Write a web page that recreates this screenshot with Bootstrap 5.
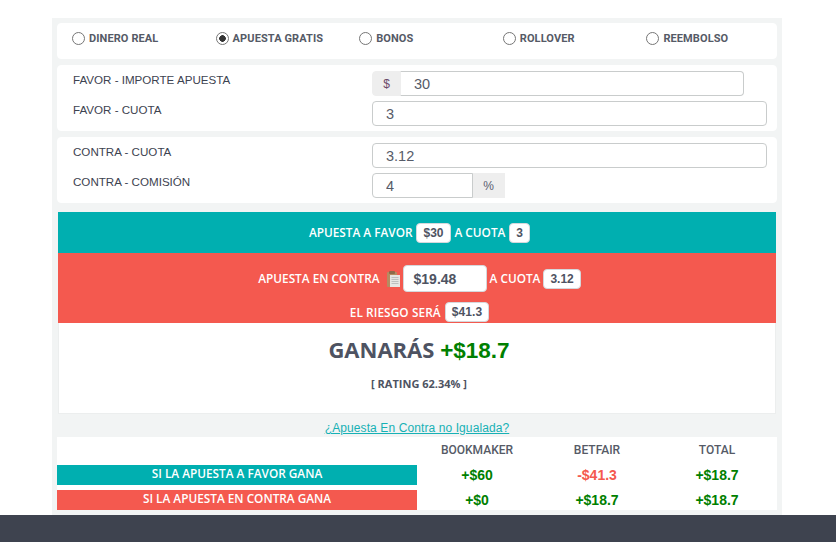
<!DOCTYPE html>
<html lang="es">
<head>
<meta charset="utf-8">
<title>Calculadora</title>
<link href="https://cdn.jsdelivr.net/npm/bootstrap@5.3.0/dist/css/bootstrap.min.css" rel="stylesheet">
<style>
html,body{height:542px;overflow:hidden}
body{background:#fff;font-family:"Liberation Sans",Arial,sans-serif;color:#444a5a;display:flex;flex-direction:column}
.calc-wrap{width:730px;height:497px;margin:18px 0 0 52px;background:#f2f4f4;padding:5px;flex:none}
.pane{background:#fff;border:1px solid #fff;border-radius:4px;margin-bottom:6px}
.radios{height:36px;padding:8px 0 0 14px}
.radio-item{width:143.6px;flex:none;align-self:flex-start;display:flex;align-items:center;font:700 11px/13px Roboto,sans-serif;letter-spacing:.1px;color:#555a66;gap:4px}
.radio-item .form-check-input{width:13px;height:13px;margin:0;border:1px solid #767676;border-radius:50%;flex:none}
.radio-item .form-check-input:checked{background:#fff radial-gradient(circle,#333 0 3px,transparent 3.6px);border-color:#767676}
.form-line{height:66px;padding:5px 9px 0 0}
.field-row{height:25px;margin-bottom:5px}
.field-label{width:314px;padding:2px 0 0 15px;font-size:11.6px;line-height:14px;color:#3d4350;align-self:flex-start;flex:none}
.field-box{width:395px;flex:none}
.field-input{height:25px;min-height:25px;padding:0 13px;font-size:14.5px;line-height:23px;color:#565b68;border:1px solid #c9cccc;border-radius:4px;box-shadow:none}
.addon{height:25px;padding:0 10px;font-size:12px;background:#eeeeee;border:1px solid #eeeeee;color:#6b4a6a}
.money .addon{width:29px;justify-content:center;border-radius:4px 0 0 4px}
.money{width:372px}
.money .field-input{border-left-color:#eee}
.percent{width:133px}
.percent .addon{width:33px;justify-content:center;border-radius:0;color:#5a6070}
.result{margin:9px 1px 0}
.band-a{background:#00afb0;height:41px;padding:0 0 2px 5px}
.band-b{background:#f4594f;height:70px;padding:10px 0 0 5px}
.band-a,.band-b,.win-bar{color:#fff;font:600 11.8px/16px "Open Sans",sans-serif}
.tag{display:inline-block;background:#fff;color:#4e5362;border:1px solid #d5d8dc;border-radius:4px;font:700 12px/16px "Liberation Sans",sans-serif;padding:1px 6px;height:20px;margin-top:2px}
.risk-line .tag{margin-top:0}
.stake-row{padding-bottom:2px}
.stake{width:84px;height:27px;margin:2px 3px 0 0;background:#fff;border:1px solid #d5d8dc;border-radius:4px;font:700 14px/27px "Liberation Sans",sans-serif;color:#4e5362;padding:0 0 0 10px;display:inline-block;text-align:left}
.clip{margin:3px 3px 0 7px}
.cuota-tag{margin-left:3px}
.risk-line{margin-top:8px;letter-spacing:.1px}
.win-box{height:91px;background:#fff;border:1px solid #eceeee;border-top:0;padding:10px 0 0 4px}
.win-title{font:700 22px/32px "Open Sans",sans-serif;color:#4e5362}
.win-title b{font:700 22.5px/32px "Liberation Sans",sans-serif;color:#008000}
.rating{font:700 11px/14px "Open Sans",sans-serif;color:#4e5362;margin-top:10px}
.unmatched{height:23px;font-size:12px;letter-spacing:.1px;line-height:28px}
.unmatched a{color:#17b1b5}
.outcome{background:#fff;height:73px;width:720px;margin:0}
.outcome .head-cell{height:28px;font:500 12px/27px Roboto,sans-serif;color:#555a66}
.outcome .val{height:25px;font-size:14px;line-height:20px;font-weight:700;color:#008000}
.outcome .val.neg{color:#f4594f}
.win-bar{height:20px;line-height:17px;text-align:center}
.win-bar.t{background:#00afb0}
.win-bar.r{background:#f4594f}
.foot{background:#3e434f;height:27px;flex:none}
</style>
</head>
<body>
<div class="calc-wrap">
  <div class="pane radios d-flex">
    <label class="radio-item"><input class="form-check-input" type="radio" name="m"> DINERO REAL</label>
    <label class="radio-item"><input class="form-check-input" type="radio" name="m" checked> APUESTA GRATIS</label>
    <label class="radio-item"><input class="form-check-input" type="radio" name="m"> BONOS</label>
    <label class="radio-item"><input class="form-check-input" type="radio" name="m"> ROLLOVER</label>
    <label class="radio-item"><input class="form-check-input" type="radio" name="m"> REEMBOLSO</label>
  </div>
  <div class="pane form-line">
    <div class="d-flex field-row">
      <div class="field-label">FAVOR - IMPORTE APUESTA</div>
      <div class="field-box"><div class="input-group flex-nowrap money"><span class="input-group-text addon">$</span><input class="form-control field-input" value="30"></div></div>
    </div>
    <div class="d-flex field-row">
      <div class="field-label">FAVOR - CUOTA</div>
      <div class="field-box"><input class="form-control field-input" value="3"></div>
    </div>
  </div>
  <div class="pane form-line">
    <div class="d-flex field-row">
      <div class="field-label">CONTRA - CUOTA</div>
      <div class="field-box"><input class="form-control field-input" value="3.12"></div>
    </div>
    <div class="d-flex field-row">
      <div class="field-label">CONTRA - COMISIÓN</div>
      <div class="field-box"><div class="input-group flex-nowrap percent"><input class="form-control field-input" value="4"><span class="input-group-text addon">%</span></div></div>
    </div>
  </div>
  <div class="result text-center">
    <div class="band-a d-flex align-items-center justify-content-center gap-1">APUESTA A FAVOR <span class="tag">$30</span> A CUOTA <span class="tag">3</span></div>
    <div class="band-b">
      <div class="stake-row d-flex align-items-center justify-content-center">
        APUESTA EN CONTRA
        <svg class="clip" width="13" height="16" viewBox="0 0 13 16"><rect x="0" y="1" width="10" height="15" rx="1" fill="#b58c62"/><rect x="3" y="4" width="10" height="12" fill="#e6e6e3"/><path d="M4.5 6.5h7M4.5 8.5h7M4.5 10.5h7M4.5 12.5h7" stroke="#bcbfbf" stroke-width="1"/><rect x="2" y="0" width="6" height="3" rx="1" fill="#8d6a4a"/></svg>
        <span class="stake">$19.48</span>A CUOTA<span class="tag cuota-tag">3.12</span>
      </div>
      <div class="risk-line d-flex align-items-center justify-content-center gap-1">EL RIESGO SERÁ <span class="tag">$41.3</span></div>
    </div>
    <div class="win-box">
      <div class="win-title">GANARÁS <b>+$18.7</b></div>
      <div class="rating">[ RATING 62.34% ]</div>
    </div>
  </div>
  <div class="unmatched text-center"><a href="#">¿Apuesta En Contra no Igualada?</a></div>
  <div class="row g-0 outcome text-center">
    <div class="col-6 head-cell"></div>
    <div class="col-2 head-cell">BOOKMAKER</div>
    <div class="col-2 head-cell">BETFAIR</div>
    <div class="col-2 head-cell">TOTAL</div>
    <div class="col-6 val"><div class="win-bar t">SI LA APUESTA A FAVOR GANA</div></div>
    <div class="col-2 val">+$60</div>
    <div class="col-2 val neg">-$41.3</div>
    <div class="col-2 val">+$18.7</div>
    <div class="col-6 val"><div class="win-bar r">SI LA APUESTA EN CONTRA GANA</div></div>
    <div class="col-2 val">+$0</div>
    <div class="col-2 val">+$18.7</div>
    <div class="col-2 val">+$18.7</div>
  </div>
</div>
<div class="foot"></div>
<script src="https://cdn.jsdelivr.net/npm/bootstrap@5.3.0/dist/js/bootstrap.bundle.min.js"></script>
</body>
</html>
